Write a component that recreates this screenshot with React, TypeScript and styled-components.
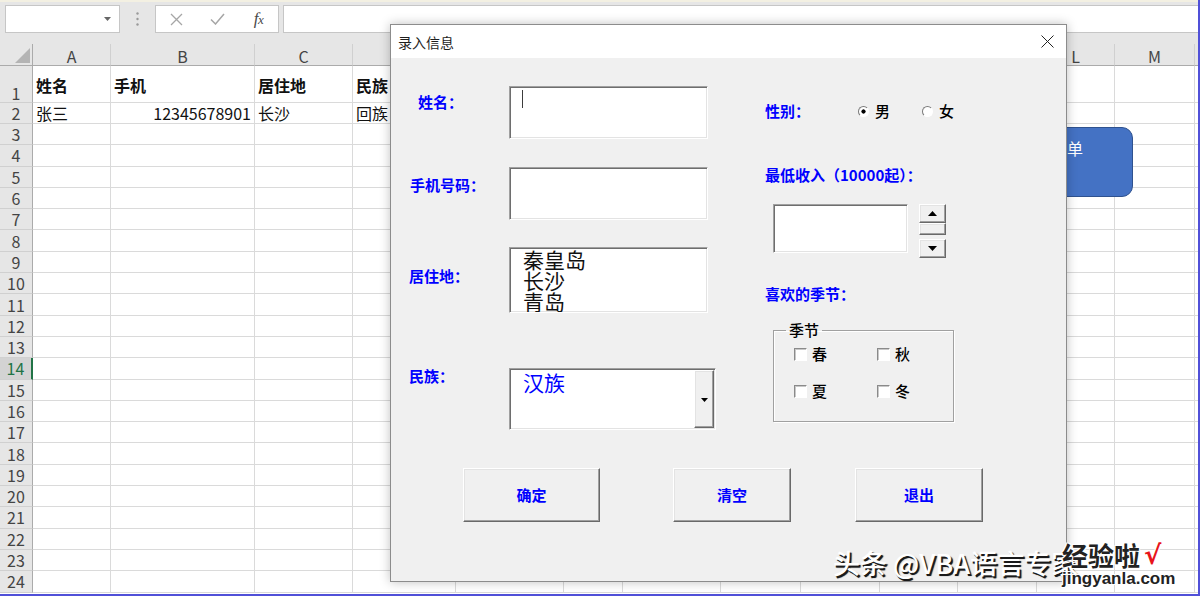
import React from "react";
import styled, { createGlobalStyle, css } from "styled-components";

const GlobalStyle = createGlobalStyle`
  html, body { margin: 0; padding: 0; }
  body {
    width: 1200px; height: 596px; overflow: hidden; background: #fff;
    font-family: "Noto Sans CJK SC", "Noto Sans", sans-serif;
  }
  * { box-sizing: border-box; }
`;

const CJK = `"Noto Sans CJK SC", "Noto Sans", sans-serif`;

const sunken = css`
  border: 1px solid;
  border-color: #a0a0a0 #ffffff #ffffff #a0a0a0;
  box-shadow: inset 1px 1px 0 #6e6e6e, inset -1px -1px 0 #e3e3e3;
  background: #fff;
`;

const raised = css`
  border: 1px solid;
  border-color: #ffffff #696969 #696969 #ffffff;
  box-shadow: inset -1px -1px 0 #a0a0a0, inset 1px 1px 0 #e3e3e3;
  background: #f0f0f0;
`;

/* ---------- Excel chrome ---------- */

const Screen = styled.div`
  position: relative;
  width: 1200px;
  height: 596px;
  overflow: hidden;
  background: #fff;
  display: flex;
  flex-direction: column;
  border-right: 2px solid #5050d8;
  border-bottom: 2px solid #5050d8;
`;

const FormulaBar = styled.div`
  flex: none;
  height: 44px;
  background: #e6e6e6;
  border-top: 2px solid #f3f0e2;
  display: flex;
  align-items: flex-start;
  padding: 3px 0 0 5px;
`;

const NameBox = styled.div`
  width: 115px;
  height: 28px;
  background: #fff;
  border: 1px solid #c6c6c6;
  display: flex;
  align-items: center;
  justify-content: flex-end;
  padding-right: 8px;
`;

const Grip = styled.div`
  width: 35px;
  height: 28px;
  display: flex;
  align-items: center;
  justify-content: center;
`;

const FxBox = styled.div`
  width: 124px;
  height: 28px;
  background: #fff;
  border: 1px solid #c6c6c6;
  display: grid;
  grid-template-columns: 41px 41px 41px;
  align-items: center;
  justify-items: center;
`;

const FxText = styled.span`
  font-family: "Liberation Serif", serif;
  font-style: italic;
  font-size: 17px;
  line-height: 18px;
  color: #4a4a4a;
  letter-spacing: -0.5px;
  & > small { font-size: 13px; }
`;

const FormulaInput = styled.div`
  flex: 1;
  margin-left: 4px;
  height: 28px;
  background: #fff;
  border: 1px solid #c6c6c6;
  border-right: none;
`;

const Sheet = styled.div`
  flex: none;
  display: grid;
  grid-template-columns: 33px 78px 144px 98px 103px 108px 59px 98px 80px 79px 78px 79px 78px 80px 1fr;
  grid-template-rows: 22px 37px 21px repeat(22, 21.3px);
`;

const HeadBase = styled.div`
  background: #e6e6e6;
  color: #444;
  font-family: ${CJK};
  font-size: 16px;
  line-height: 16px;
  display: flex;
  justify-content: center;
`;

const Corner = styled(HeadBase)`
  border-right: 1px solid #ababab;
  border-bottom: 1px solid #ababab;
  align-items: flex-end;
  justify-content: flex-end;
  padding: 0 2px 2px 0;
`;

const ColHead = styled(HeadBase)`
  border-right: 1px solid #d0d0d0;
  border-bottom: 1px solid #ababab;
  align-items: center;
  padding-top: 3px;
`;

const RowHead = styled(HeadBase)<{ $active?: boolean; $end?: boolean }>`
  border-bottom: 1px solid #d0d0d0;
  border-right: ${(p) => (p.$active ? "2px solid #217346" : "1px solid #ababab")};
  background: ${(p) => (p.$active ? "#d3d3d3" : "#e6e6e6")};
  color: ${(p) => (p.$active ? "#217346" : "#444")};
  align-items: ${(p) => (p.$end ? "flex-end" : "center")};
  padding-bottom: ${(p) => (p.$end ? "1px" : "0")};
`;

const Cell = styled.div<{ $bold?: boolean; $right?: boolean; $end?: boolean }>`
  border-right: 1px solid #dadada;
  border-bottom: 1px solid #dadada;
  font-family: ${CJK};
  font-size: 16px;
  line-height: 16px;
  color: #111;
  font-weight: ${(p) => (p.$bold ? 700 : 400)};
  display: flex;
  align-items: ${(p) => (p.$end ? "flex-end" : "center")};
  justify-content: ${(p) => (p.$right ? "flex-end" : "flex-start")};
  padding: 0 3px ${(p) => (p.$end ? "9px" : "0")};
  white-space: nowrap;
`;

const Shape = styled.div`
  position: absolute;
  left: 1003px;
  top: 127px;
  width: 130px;
  height: 70px;
  border-radius: 11px;
  background: #4472c4;
  border: 1px solid #2f528f;
  color: #fff;
  font-family: ${CJK};
  font-size: 16px;
  line-height: 18px;
  padding: 11px 0 0 15px;
`;

/* ---------- Dialog ---------- */

const Dialog = styled.div`
  position: absolute;
  left: 390px;
  top: 24px;
  width: 677px;
  height: 558px;
  border: 1px solid #8c8c8c;
  background: #f0f0f0;
  box-shadow: 0 0 10px rgba(0, 0, 0, 0.25);
  display: flex;
  flex-direction: column;
`;

const TitleBar = styled.div`
  flex: none;
  height: 33px;
  background: #fff;
  display: flex;
  align-items: center;
  justify-content: space-between;
  padding: 0 12px 0 7px;
  font-family: ${CJK};
  font-size: 14px;
  line-height: 18px;
  color: #1e1e1e;
`;

const DialogBody = styled.div`
  flex: 1;
  display: flex;
  flex-direction: column;
  padding-top: 28px;
`;

const FormArea = styled.div`
  display: flex;
  padding-left: 18px;
`;

const LeftCol = styled.div`
  width: 307px;
  display: flex;
  flex-direction: column;
`;

const FieldRow = styled.div<{ $mt: number }>`
  display: flex;
  align-items: flex-start;
  margin-top: ${(p) => p.$mt}px;
`;

const FieldLabel = styled.div<{ $dx?: number; $dy?: number; $w?: number }>`
  flex: none;
  width: ${(p) => p.$w ?? 100}px;
  padding-left: ${(p) => p.$dx ?? 0}px;
  padding-top: ${(p) => p.$dy ?? 0}px;
  font-family: ${CJK};
  font-size: 15px;
  line-height: 16px;
  font-weight: 700;
  color: #0000ff;
  white-space: nowrap;
`;

const TextBox = styled.div<{ $w: number; $h: number }>`
  ${sunken};
  width: ${(p) => p.$w}px;
  height: ${(p) => p.$h}px;
  padding: 3px 0 0 12px;
`;

const TextCaret = styled.div`
  width: 1px;
  height: 18px;
  background: #3c3c3c;
`;

const ListBox = styled.div`
  ${sunken};
  width: 199px;
  height: 66px;
  overflow: hidden;
  padding: 1px 0 0 13px;
  font-family: ${CJK};
  font-size: 21px;
  line-height: 21px;
  color: #111;
`;

const Combo = styled.div`
  ${sunken};
  width: 207px;
  height: 62px;
  display: flex;
  padding: 1px;
`;

const ComboText = styled.div`
  flex: 1;
  padding: 0 0 0 12px;
  font-family: ${CJK};
  font-size: 21px;
  line-height: 24px;
  color: #0000ff;
`;

const ComboButton = styled.div`
  ${raised};
  width: 20px;
  display: flex;
  align-items: center;
  justify-content: center;
  padding-top: 2px;
`;

const RightCol = styled.div`
  margin-left: 49px;
  display: flex;
  flex-direction: column;
  align-items: flex-start;
`;

const GenderRow = styled.div`
  margin-top: 17px;
  height: 16px;
  display: flex;
  align-items: center;
`;

const Choice = styled.label<{ $ml?: number; $gap?: number }>`
  display: flex;
  align-items: center;
  gap: ${(p) => p.$gap ?? 6}px;
  margin-left: ${(p) => p.$ml ?? 0}px;
  font-family: ${CJK};
  font-size: 15px;
  line-height: 16px;
  font-weight: 500;
  color: #000;
`;

const RadioCircle = styled.span<{ $on?: boolean }>`
  width: 11px;
  height: 11px;
  border-radius: 50%;
  border: 1px solid;
  border-color: #7a7a7a #ffffff #ffffff #7a7a7a;
  background: ${(p) =>
    p.$on ? "radial-gradient(circle, #000 0 1.8px, #fff 2.4px)" : "#fff"};
`;

const CheckBox = styled.span`
  width: 13px;
  height: 13px;
  border: 1px solid;
  border-color: #8a8a8a #ffffff #ffffff #8a8a8a;
  box-shadow: inset 1px 1px 0 #c8c8c8;
  background: #fff;
`;

const SideLabel = styled(FieldLabel)<{ $mt: number }>`
  width: auto;
  margin-top: ${(p) => p.$mt}px;
`;

const SpinRow = styled.div`
  margin-top: 21px;
  margin-left: 8px;
  display: flex;
  gap: 11px;
  align-items: flex-start;
`;

const Spin = styled.div`
  width: 27px;
  display: flex;
  flex-direction: column;
`;

const SpinPart = styled.div<{ $h: number; $mt?: number }>`
  ${raised};
  height: ${(p) => p.$h}px;
  margin-top: ${(p) => p.$mt ?? 0}px;
  display: flex;
  align-items: center;
  justify-content: center;
`;

const Frame = styled.fieldset`
  margin: 20px 0 0 8px;
  width: 181px;
  height: 100px;
  padding: 0 0 0 20px;
  min-width: 0;
  border: 1px solid #a0a0a0;
  box-shadow: 1px 1px 0 #fff, inset 1px 1px 0 #fff;
`;

const FrameCaption = styled.legend`
  margin-left: -8px;
  padding: 0 3px;
  font-family: ${CJK};
  font-size: 15px;
  line-height: 16px;
  font-weight: 500;
  color: #000;
`;

const CheckGrid = styled.div`
  display: grid;
  grid-template-columns: 83px 83px;
  row-gap: 21px;
  padding-top: 8px;
`;

const ButtonRow = styled.div`
  display: flex;
  margin-top: 38px;
  padding-left: 72px;
`;

const DlgButton = styled.div<{ $w: number; $ml?: number }>`
  ${raised};
  width: ${(p) => p.$w}px;
  height: 54px;
  margin-left: ${(p) => p.$ml ?? 0}px;
  display: flex;
  align-items: center;
  justify-content: center;
  font-family: ${CJK};
  font-size: 15px;
  line-height: 16px;
  font-weight: 700;
  color: #0000ff;
`;

/* ---------- Watermark ---------- */

const Watermark = styled.div`
  position: absolute;
  left: 833px;
  top: 545px;
  font-family: ${CJK};
  font-size: 27px;
  line-height: 36px;
  font-weight: 500;
  color: #fff;
  white-space: nowrap;
  text-shadow: 1.5px 1.5px 0 #1a1a1a, 2px 2px 1px #444;
`;

const Logo = styled.div`
  position: absolute;
  left: 1062px;
  top: 541px;
  display: flex;
  flex-direction: column;
  align-items: flex-start;
  font-family: ${CJK};
  color: #222;
  white-space: nowrap;
  text-shadow: -1px -1px 0 #fff, 1px -1px 0 #fff, -1px 1px 0 #fff, 1px 1px 0 #fff;
`;

const LogoTop = styled.div`
  display: flex;
  align-items: flex-end;
  font-size: 26px;
  line-height: 28px;
  font-weight: 700;
  gap: 4px;
`;

const LogoCheck = styled.span`
  color: #e8141a;
  font-size: 26px;
  line-height: 28px;
  font-family: "DejaVu Sans", sans-serif;
`;

const LogoUrl = styled.div`
  font-family: "Liberation Sans", sans-serif;
  font-size: 17px;
  line-height: 18px;
  font-weight: 700;
  margin-top: 1px;
`;

/* ---------- icons ---------- */

const DownTri = ({ w = 7, h = 4, color = "#000" }: { w?: number; h?: number; color?: string }) => (
  <svg width={w} height={h} viewBox={`0 0 ${w} ${h}`}>
    <polygon points={`0,0 ${w},0 ${w / 2},${h}`} fill={color} />
  </svg>
);

const UpTri = ({ w = 7, h = 4 }: { w?: number; h?: number }) => (
  <svg width={w} height={h} viewBox={`0 0 ${w} ${h}`}>
    <polygon points={`0,${h} ${w},${h} ${w / 2},0`} fill="#000" />
  </svg>
);

// the last column (N) is only a sliver at the window edge, so its letter is not visible
const COLS = ["A", "B", "C", "D", "E", "F", "G", "H", "I", "J", "K", "L", "M", ""];

type CellData = { text: string; right?: boolean };
const DATA: Record<number, Record<string, CellData>> = {
  1: { A: { text: "姓名" }, B: { text: "手机" }, C: { text: "居住地" }, D: { text: "民族" } },
  2: {
    A: { text: "张三" },
    B: { text: "12345678901", right: true },
    C: { text: "长沙" },
    D: { text: "回族" },
  },
};

export default function App() {
  const rows = Array.from({ length: 24 }, (_, i) => i + 1);
  return (
    <>
      <GlobalStyle />
      <Screen>
        <FormulaBar>
          <NameBox>
            <DownTri w={7} h={4} color="#666" />
          </NameBox>
          <Grip>
            <svg width="3" height="14" viewBox="0 0 3 14">
              <circle cx="1.5" cy="1.5" r="1.2" fill="#9a9a9a" />
              <circle cx="1.5" cy="7" r="1.2" fill="#9a9a9a" />
              <circle cx="1.5" cy="12.5" r="1.2" fill="#9a9a9a" />
            </svg>
          </Grip>
          <FxBox>
            <svg width="13" height="13" viewBox="0 0 13 13">
              <path d="M1 1 L12 12 M12 1 L1 12" stroke="#a6a6a6" strokeWidth="1.3" />
            </svg>
            <svg width="15" height="12" viewBox="0 0 15 12">
              <path d="M1 6.5 L5.5 11 L14 1" stroke="#a6a6a6" strokeWidth="1.5" fill="none" />
            </svg>
            <FxText>
              f<small>x</small>
            </FxText>
          </FxBox>
          <FormulaInput />
        </FormulaBar>

        <Sheet>
          <Corner>
            <svg width="15" height="15" viewBox="0 0 15 15">
              <polygon points="15,0 15,15 0,15" fill="#b4b4b4" />
            </svg>
          </Corner>
          {COLS.map((c, i) => (
            <ColHead key={i}>{c}</ColHead>
          ))}
          {rows.map((r) => (
            <React.Fragment key={r}>
              <RowHead $active={r === 14} $end={r === 1}>
                {r}
              </RowHead>
              {COLS.map((c, i) => {
                const d = c ? DATA[r]?.[c] : undefined;
                return (
                  <Cell key={i} $bold={r === 1} $end={r === 1} $right={d?.right}>
                    {d?.text}
                  </Cell>
                );
              })}
            </React.Fragment>
          ))}
        </Sheet>

        <Shape>填写表单</Shape>

        <Dialog>
          <TitleBar>
            <span>录入信息</span>
            <svg width="13" height="13" viewBox="0 0 13 13">
              <path d="M0.5 0.5 L12.5 12.5 M12.5 0.5 L0.5 12.5" stroke="#222" strokeWidth="1" />
            </svg>
          </TitleBar>
          <DialogBody>
            <FormArea>
              <LeftCol>
                <FieldRow $mt={0}>
                  <FieldLabel $dx={9} $dy={8}>
                    姓名：
                  </FieldLabel>
                  <TextBox $w={199} $h={53}>
                    <TextCaret />
                  </TextBox>
                </FieldRow>
                <FieldRow $mt={28}>
                  <FieldLabel $dx={1} $dy={10}>
                    手机号码：
                  </FieldLabel>
                  <TextBox $w={199} $h={53} />
                </FieldRow>
                <FieldRow $mt={27}>
                  <FieldLabel $dy={21}>居住地：</FieldLabel>
                  <ListBox>
                    <div>秦皇岛</div>
                    <div>长沙</div>
                    <div>青岛</div>
                  </ListBox>
                </FieldRow>
                <FieldRow $mt={55}>
                  <FieldLabel $dy={0}>民族：</FieldLabel>
                  <Combo>
                    <ComboText>汉族</ComboText>
                    <ComboButton>
                      <DownTri w={7} h={4} />
                    </ComboButton>
                  </Combo>
                </FieldRow>
              </LeftCol>

              <RightCol>
                <GenderRow>
                  <FieldLabel $w={93}>性别：</FieldLabel>
                  <Choice>
                    <RadioCircle $on />男
                  </Choice>
                  <Choice $ml={32}>
                    <RadioCircle />女
                  </Choice>
                </GenderRow>
                <SideLabel $mt={48}>最低收入（10000起）：</SideLabel>
                <SpinRow>
                  <TextBox $w={135} $h={49} />
                  <Spin>
                    <SpinPart $h={19}>
                      <UpTri w={9} h={5} />
                    </SpinPart>
                    <SpinPart $h={12} />
                    <SpinPart $h={19} $mt={4}>
                      <DownTri w={9} h={5} />
                    </SpinPart>
                  </Spin>
                </SpinRow>
                <SideLabel $mt={28}>喜欢的季节：</SideLabel>
                <Frame>
                  <FrameCaption>季节</FrameCaption>
                  <CheckGrid>
                    <Choice $gap={5}>
                      <CheckBox />春
                    </Choice>
                    <Choice $gap={5}>
                      <CheckBox />秋
                    </Choice>
                    <Choice $gap={5}>
                      <CheckBox />夏
                    </Choice>
                    <Choice $gap={5}>
                      <CheckBox />冬
                    </Choice>
                  </CheckGrid>
                </Frame>
              </RightCol>
            </FormArea>

            <ButtonRow>
              <DlgButton $w={137}>确定</DlgButton>
              <DlgButton $w={118} $ml={73}>
                清空
              </DlgButton>
              <DlgButton $w={128} $ml={64}>
                退出
              </DlgButton>
            </ButtonRow>
          </DialogBody>
        </Dialog>

        <Watermark>头条 @VBA语言专家</Watermark>
        <Logo>
          <LogoTop>
            经验啦<LogoCheck>√</LogoCheck>
          </LogoTop>
          <LogoUrl>jingyanla.com</LogoUrl>
        </Logo>
      </Screen>
    </>
  );
}
